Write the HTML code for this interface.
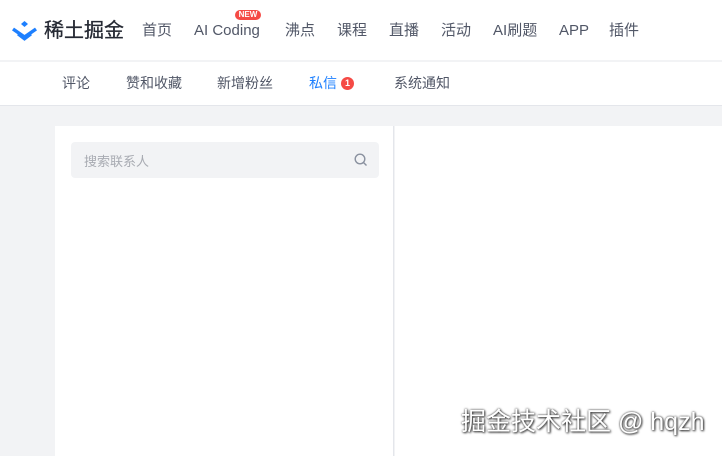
<!DOCTYPE html>
<html><head><meta charset="utf-8"><style>
*{margin:0;padding:0;box-sizing:border-box}
body{width:722px;height:451px;overflow:hidden;background:#f2f3f5;font-family:"Liberation Sans","Noto Sans CJK SC",sans-serif;position:relative}
.hd{position:absolute;left:0;top:0;width:722px;height:60px;background:#fff}
.hd span{position:absolute;top:21px;font-size:15px;line-height:20px;height:20px;color:#515767}
.hd span.l{top:21px}
.sub{position:absolute;left:0;top:62px;width:722px;height:44px;background:#fff;border-bottom:1px solid #e4e6eb}
.sub span{position:absolute;top:11px;font-size:14px;line-height:20px;color:#515767}
.lp{position:absolute;left:55px;top:126px;width:339px;height:330px;background:#fff;border-right:1px solid #e4e6eb}
.rp{position:absolute;left:395px;top:126px;width:327px;height:330px;background:#fff}
.sb{position:absolute;left:16px;top:16px;width:308px;height:36px;background:#f2f3f5;border-radius:4px}
.sb span{position:absolute;left:13px;top:9px;font-size:13px;color:#a8abb2}
.wm{position:absolute;left:461px;top:402px;font-size:25px;color:#fff;text-shadow:0 0 2px #333,1px 1px 2px #333;white-space:nowrap}
</style></head><body>
<div class="hd">
<svg style="position:absolute;left:11px;top:21px" width="27" height="21" viewBox="0 0 27 21"><path d="M13.5 0 L17 3 L13.5 6 L10 3Z" fill="#1e80ff"/><path d="M2 8 L13.5 16 L25 8" stroke="#1e80ff" stroke-width="3.5" fill="none"/><path d="M7 13 L13.5 18 L20 13" stroke="#1e80ff" stroke-width="3" fill="none"/></svg>
<span style="left:44px;top:18px;font-size:20px;line-height:26px;height:26px;color:#252933;-webkit-text-stroke:0.3px #252933">稀土掘金</span>
<span style="left:142px">首页</span>
<span class="l" style="left:194px">AI Coding</span>
<div style="position:absolute;left:235px;top:10px;width:26px;height:10px;background:#f54a45;border-radius:5px;color:#fff;font-size:8px;line-height:10px;text-align:center;font-weight:bold">NEW</div>
<span style="left:285px">沸点</span>
<span style="left:337px">课程</span>
<span style="left:389px">直播</span>
<span style="left:441px">活动</span>
<span class="l" style="left:493px">AI<span style="position:static;font-size:15px">刷题</span></span>
<span class="l" style="left:559px">APP</span>
<span style="left:609px">插件</span>
</div>
<div class="sub">
<span style="left:62px">评论</span>
<span style="left:126px">赞和收藏</span>
<span style="left:217px">新增粉丝</span>
<span style="left:309px;color:#1e80ff">私信</span>
<div style="position:absolute;left:341px;top:15px;width:13px;height:13px;border-radius:50%;background:#f54a45;color:#fff;font-size:9px;line-height:13px;text-align:center;font-weight:bold">1</div>
<span style="left:394px">系统通知</span>
</div>
<div class="lp"><div class="sb"><span>搜索联系人</span>
<svg style="position:absolute;left:283px;top:11px" width="14" height="14" viewBox="0 0 14 14"><circle cx="6" cy="6" r="4.8" stroke="#8a919f" stroke-width="1.4" fill="none"/><path d="M9.5 9.5L12.5 12.5" stroke="#8a919f" stroke-width="1.4"/></svg></div></div>
<div class="rp"></div>
<div class="wm">掘金技术社区 @ hqzh</div>
</body></html>
